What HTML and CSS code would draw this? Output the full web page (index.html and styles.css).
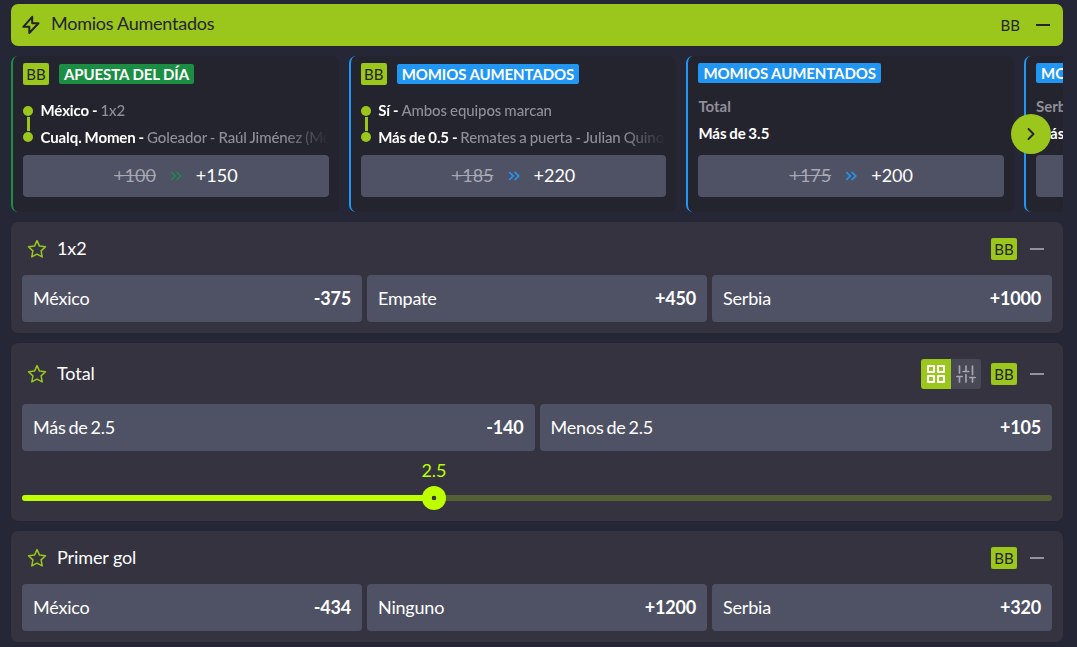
FILE: index.html
```html
<!DOCTYPE html>
<html lang="es">
<head>
<meta charset="utf-8">
<title>Momios</title>
<link rel="stylesheet" href="styles.css">
</head>
<body>
<svg class="defs" width="0" height="0">
  <symbol id="star" viewBox="0 0 20 20"><path d="M10 1.600l2.500 5.500 6 .7-4.400 4.100 1.100 6-5.200-2.800-5.200 2.800 1.100-6L1.500 7.800l6-.7z" fill="none" stroke="#9bc61c" stroke-width="1.500" stroke-linejoin="round"/></symbol>
  <symbol id="dbl" viewBox="0 0 12 10"><path d="M1.200 1l4 4-4 4M6.700 1l4 4-4 4" fill="none" stroke="currentColor" stroke-width="1.700"/></symbol>
</svg>
<main class="page">
  <header class="banner">
    <svg class="bolt" viewBox="0 0 20 20"><path d="M11.200 1.800L2.300 11.800h6V18L17.500 8.200h-6.300z" fill="none" stroke="#24242e" stroke-width="2" stroke-linejoin="round"/></svg>
    <h1 class="banner-title">Momios Aumentados</h1>
    <span class="banner-bb">BB</span>
    <span class="minus dark"></span>
  </header>

  <div class="carousel-wrap">
    <div class="carousel">
      <article class="card green">
        <div class="tags"><span class="bb">BB</span><span class="tag">APUESTA DEL DÍA</span></div>
        <ul class="legs">
          <li class="leg"><b>México - </b>1x2</li>
          <li class="leg"><b>Cualq. Momen - </b>Goleador - Raúl Jiménez (México)</li>
        </ul>
        <div class="boost"><s>+100</s><svg class="dbl"><use href="#dbl"/></svg><span>+150</span></div>
      </article>
      <article class="card">
        <div class="tags"><span class="bb">BB</span><span class="tag">MOMIOS AUMENTADOS</span></div>
        <ul class="legs">
          <li class="leg"><b>Sí - </b>Ambos equipos marcan</li>
          <li class="leg"><b>Más de 0.5 - </b>Remates a puerta - Julian Quinones</li>
        </ul>
        <div class="boost"><s>+185</s><svg class="dbl"><use href="#dbl"/></svg><span>+220</span></div>
      </article>
      <article class="card">
        <div class="tags single"><span class="tag">MOMIOS AUMENTADOS</span></div>
        <div class="pick"><span class="market">Total</span><span class="choice">Más de 3.5</span></div>
        <div class="boost"><s>+175</s><svg class="dbl"><use href="#dbl"/></svg><span>+200</span></div>
      </article>
      <article class="card">
        <div class="tags single"><span class="tag">MOMIOS AUMENTADOS</span></div>
        <div class="pick"><span class="market">Serbia</span><span class="choice">Más de 0.5</span></div>
        <div class="boost"></div>
      </article>
    </div>
    <button class="next"><svg width="20" height="20" viewBox="0 0 20 20"><path d="M7.500 5l5 5-5 5" fill="none" stroke="#24242e" stroke-width="1.900" stroke-linecap="round" stroke-linejoin="round"/></svg></button>
  </div>

  <section class="panel">
    <div class="panel-head"><svg class="star"><use href="#star"/></svg><h2 class="title">1x2</h2><span class="bb">BB</span><span class="minus"></span></div>
    <div class="odds">
      <div class="odd"><span>México</span><b>-375</b></div>
      <div class="odd"><span>Empate</span><b>+450</b></div>
      <div class="odd"><span>Serbia</span><b>+1000</b></div>
    </div>
  </section>

  <section class="panel">
    <div class="panel-head tall"><svg class="star"><use href="#star"/></svg><h2 class="title">Total</h2>
      <div class="toggle">
        <span class="toggle-item on"><svg width="18" height="18" viewBox="0 0 18 18"><path d="M1 1h6v6H1zM11 1h6v6h-6zM1 11h6v6H1zM11 11h6v6h-6z" fill="none" stroke="#fff" stroke-width="2" stroke-linejoin="round"/></svg></span>
        <span class="toggle-item"><svg width="20" height="18" viewBox="0 0 20 18"><path d="M3.500 1v7M.8 11.500h5.400M3.500 11.500V17M10 1v5.500M7.300 6.500h5.400M10 9.500V17M16.500 1v8.500M13.800 12.500h5.400M16.500 12.500V17" fill="none" stroke="#a5a5ad" stroke-width="1.700" stroke-linecap="round"/></svg></span>
      </div>
      <span class="bb">BB</span><span class="minus"></span></div>
    <div class="odds">
      <div class="odd"><span>Más de 2.5</span><b>-140</b></div>
      <div class="odd"><span>Menos de 2.5</span><b>+105</b></div>
    </div>
    <div class="slider">
      <div class="track"><div class="fill"><span class="value">2.5</span><span class="knob"></span></div></div>
    </div>
  </section>

  <section class="panel">
    <div class="panel-head"><svg class="star"><use href="#star"/></svg><h2 class="title">Primer gol</h2><span class="bb">BB</span><span class="minus"></span></div>
    <div class="odds">
      <div class="odd"><span>México</span><b>-434</b></div>
      <div class="odd"><span>Ninguno</span><b>+1200</b></div>
      <div class="odd"><span>Serbia</span><b>+320</b></div>
    </div>
  </section>
</main>
</body>
</html>
```
FILE: styles.css
```css
* { box-sizing: border-box; }
body {
  margin: 0;
  height: 647px;
  overflow: hidden;
  background: #252736;
  color: #fff;
  font: 18px/22px Lato, sans-serif;
}
h1, h2 { margin: 0; font-size: 18px; font-weight: 400; }
.defs { position: absolute; }
.page { display: flex; flex-direction: column; padding: 4px 14px 0 11px; }

.banner {
  display: flex;
  align-items: center;
  height: 42px;
  padding: 0 12px 0 10px;
  border-radius: 7px;
  background: #9bc61c;
  color: #24242e;
}
.bolt { width: 20px; height: 20px; }
.banner-title { flex: 1; margin-left: 10px; padding-bottom: 4px; letter-spacing: -0.25px; }
.banner-bb { font-size: 15px; margin-right: 16px; padding-bottom: 1px; }

.minus { width: 14px; height: 2px; background: #92929a; }
.minus.dark { background: #24242e; margin-right: 1px; }

.bb {
  display: grid;
  place-items: center;
  width: 26px;
  height: 22px;
  border-radius: 2px;
  background: #9bc61c;
  color: #24242e;
  font-size: 15px;
}

.carousel-wrap { position: relative; margin-top: 10px; }
.carousel { display: flex; gap: 10px; overflow: hidden; }
.card {
  flex: 0 0 327.700px;
  min-width: 0;
  height: 156px;
  padding: 7px 10px 0 10px;
  border-left: 2px solid #2196f3;
  border-radius: 7px;
  background: #24242e;
  --accent: #2196f3;
}
.card.green { --accent: #1b8e43; border-color: #1b8e43; }
.tags { display: flex; align-items: center; gap: 10px; height: 22px; }
.tags.single { height: 20px; }
.tag {
  height: 20px;
  padding: 0 5px;
  border-radius: 2px;
  background: var(--accent);
  font-size: 15px;
  font-weight: 700;
  line-height: 21px;
  letter-spacing: -0.1px;
  white-space: nowrap;
}
.legs {
  list-style: none;
  margin: 12px 0 0;
  padding: 0;
  height: 58px;
  font-size: 15px;
  font-weight: 500;
  line-height: 27px;
  letter-spacing: -0.1px;
  word-spacing: -0.6px;
  color: #8f8f98;
  -webkit-mask-image: linear-gradient(to right, #000 85%, transparent 100%);
}
.leg { position: relative; padding-left: 17.500px; white-space: nowrap; overflow: hidden; }
.leg b { color: #fff; font-weight: 700; }
.leg::before {
  content: "";
  position: absolute;
  left: 0;
  top: 9px;
  width: 10px;
  height: 10px;
  border-radius: 50%;
  background: #9bc61c;
}
.leg + .leg::before { top: 8px; }
.leg::after {
  content: "";
  position: absolute;
  left: 4px;
  top: 20px;
  width: 3px;
  height: 7px;
  background: #9bc61c;
}
.leg + .leg::after { top: 0; height: 7px; }
.pick {
  display: flex;
  flex-direction: column;
  height: 72px;
  padding-top: 10px;
  font-size: 15px;
  line-height: 27px;
  font-weight: 700;
  word-spacing: -1px;
}
.market { color: #8f8f98; }
.boost {
  display: flex;
  align-items: center;
  justify-content: center;
  height: 42px;
  border-radius: 4px;
  background: #4f5265;
}
.boost s, .boost span { padding-bottom: 2px; }
.boost s { color: #a7a8b2; }
.dbl { width: 12px; height: 10px; margin: 0 14px; color: var(--accent); }
.next {
  position: absolute;
  left: 1000px;
  top: 58px;
  display: grid;
  place-items: center;
  width: 40px;
  height: 40px;
  padding: 0;
  border: 0;
  border-radius: 50%;
  background: #9bc61c;
}

.panel { margin-top: 10px; padding: 0 11px 11px; border-radius: 7px; background: #34333f; }
.panel-head { display: flex; align-items: center; height: 53px; padding: 0 8px 0 5px; }
.panel-head.tall { height: 61px; }
.star { width: 20px; height: 20px; }
.title { flex: 1; margin-left: 10px; padding-bottom: 2px; letter-spacing: -0.1px; }
.panel-head .minus { margin-left: 13px; }
.toggle { display: flex; margin-right: 10px; border-radius: 3px; overflow: hidden; background: #494955; }
.toggle-item { display: grid; place-items: center; width: 30px; height: 30px; }
.toggle-item.on { background: #9bc61c; }
.odds { display: flex; gap: 5px; }
.odd {
  flex: 1;
  display: flex;
  align-items: center;
  justify-content: space-between;
  height: 47px;
  padding: 0 11px 2px;
  border-radius: 4px;
  background: #4f5265;
  letter-spacing: -0.2px;
  word-spacing: -1.500px;
}
.slider { height: 59px; padding-top: 44px; }
.track { height: 6px; border-radius: 3px; background: #556034; }
.fill { position: relative; width: 412px; height: 6px; border-radius: 3px; background: #bdff00; }
.knob {
  position: absolute;
  right: -12px;
  top: -9px;
  width: 24px;
  height: 24px;
  border-radius: 50%;
  background: radial-gradient(circle, #34333f 2px, #bdff00 2.600px);
}
.value { position: absolute; right: -20px; top: -36px; width: 40px; text-align: center; color: #bdff00; }
```
